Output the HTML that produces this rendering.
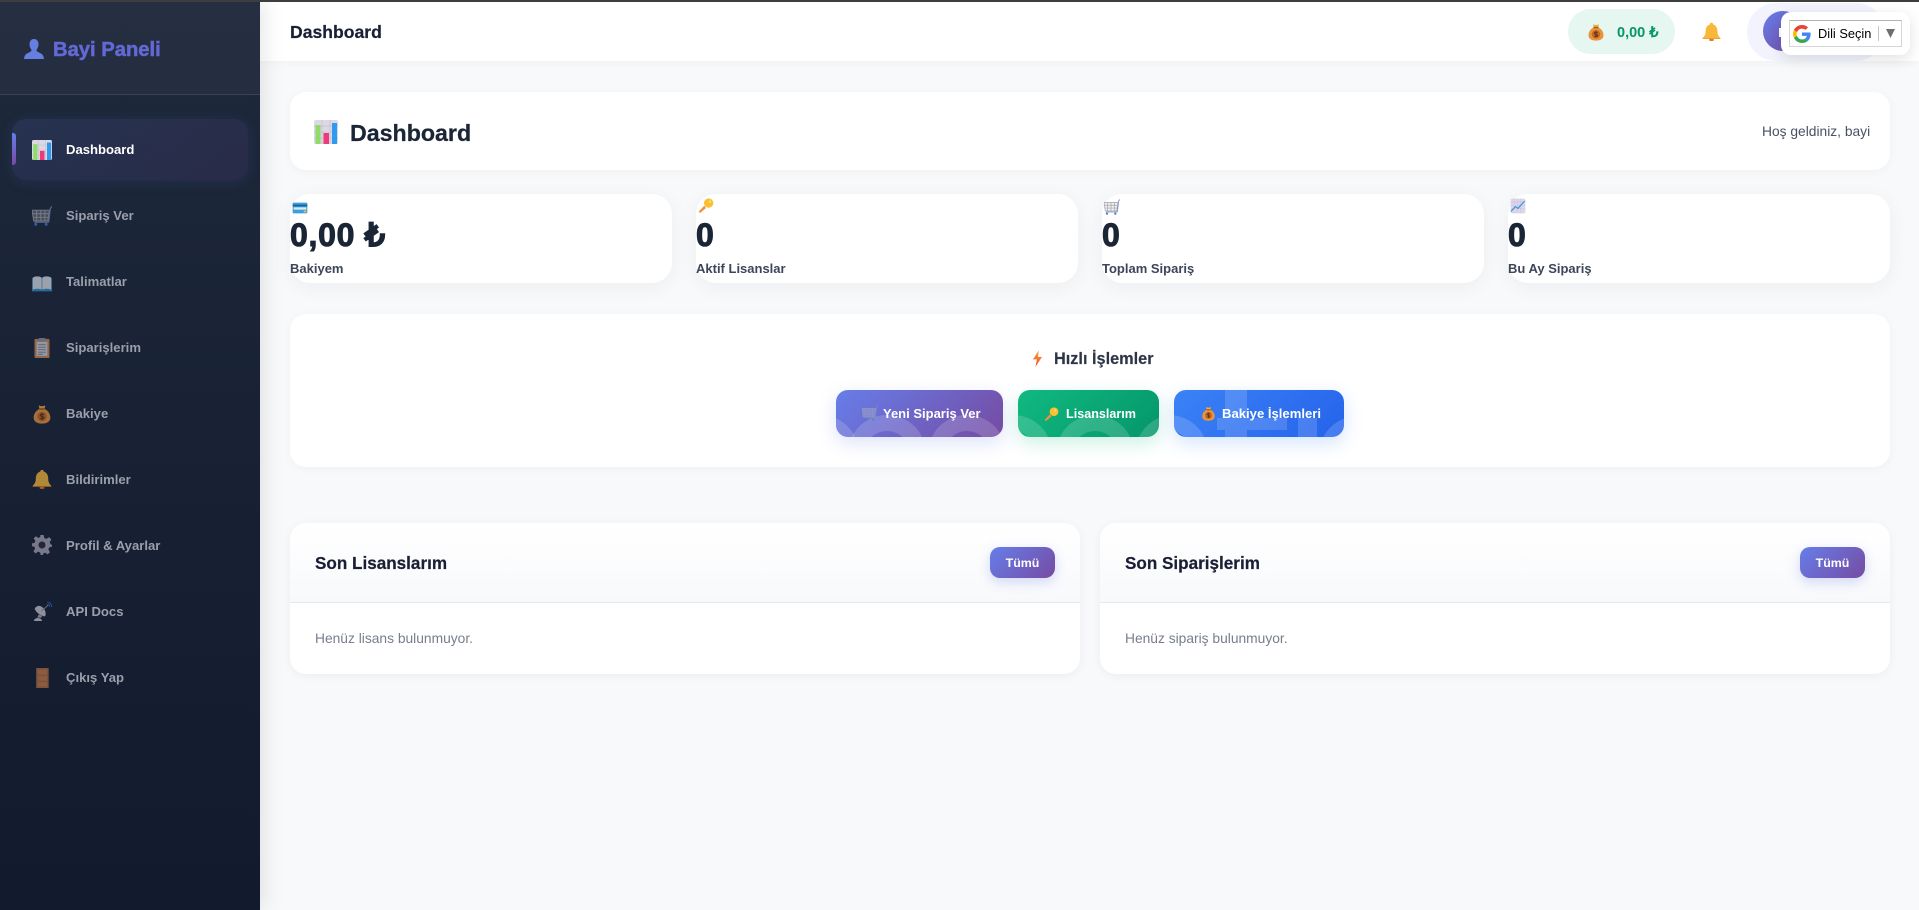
<!DOCTYPE html>
<html lang="tr">
<head>
<meta charset="utf-8">
<title>Bayi Paneli - Dashboard</title>
<style>
*{box-sizing:border-box;margin:0;padding:0}
html,body{width:1919px;height:910px;overflow:hidden;background:#f8f9fb;font-family:"Liberation Sans",Arial,sans-serif}
.a{position:absolute}
.t{position:absolute;white-space:nowrap;line-height:20px;height:20px}
svg.i{position:absolute;display:block}
#strip{left:0;top:0;width:1919px;height:2px;background:#3d3d3d;z-index:50}
#side{left:0;top:0;width:260px;height:910px;background:linear-gradient(180deg,#1e293b 0%,#121a2d 100%);box-shadow:4px 0 20px rgba(0,0,0,.1);z-index:20}
#shead{left:0;top:0;width:260px;height:95px;background:rgba(255,255,255,.03);border-bottom:1px solid rgba(255,255,255,.1)}
.logo{left:53px;top:40px;font-size:20.2px;font-weight:700;color:#6268d4;-webkit-text-stroke:.5px #6268d4}
#active{left:12px;top:119px;width:236px;height:61px;border-radius:14px;background:linear-gradient(135deg,rgba(102,126,234,.13),rgba(118,75,162,.14));box-shadow:0 2px 14px rgba(102,126,234,.13)}
#bar{left:12px;top:133px;width:4px;height:32px;border-radius:0 3px 3px 0;background:linear-gradient(180deg,#667eea,#764ba2)}
.nav{left:66px;font-size:13.1px;font-weight:700;color:#9a9fab;margin-top:.5px}
.dim{opacity:.68}
#top{left:260px;top:0;width:1659px;height:61px;background:#fff;box-shadow:0 2px 8px rgba(0,0,0,.03)}
.card{position:absolute;background:#fff}
.shadow{box-shadow:0 2px 10px rgba(0,0,0,.04)}
.stat{top:194px;width:382px;height:89px;border-radius:20px;box-shadow:0 4px 20px rgba(0,0,0,.05)}
.val{font-size:32px;font-weight:700;color:#1a2536;-webkit-text-stroke:1px #1a2536;line-height:36px;height:36px;top:217px;letter-spacing:.7px}
.lab{font-size:13px;font-weight:700;color:#3d4659;top:259px}
.btn{position:absolute;top:390px;height:47px;border-radius:12px;overflow:hidden}
.btnt{font-size:13px;font-weight:700;color:#fff;top:404px;z-index:3}
.sect{top:523px;width:790px;height:151px;border-radius:16px;overflow:hidden;box-shadow:0 2px 10px rgba(0,0,0,.05)}
.sh{position:absolute;left:0;top:0;width:100%;height:80px;background:linear-gradient(180deg,#fff,#f8f9fb);border-bottom:1px solid #e5e7ef}
.st{font-size:17.1px;font-weight:700;color:#1a1f36;top:554px;-webkit-text-stroke:.2px #1a1f36}
.se{font-size:13.8px;color:#777e8c;top:629px}
.all{position:absolute;top:547px;width:65px;height:31px;border-radius:10px;background:linear-gradient(135deg,#667eea,#764ba2);box-shadow:0 4px 12px rgba(102,126,234,.28);color:#fff;font-size:12.4px;font-weight:700;text-align:center;line-height:32px}
</style>
</head>
<body>
<svg width="0" height="0" style="position:absolute">
<defs>
<symbol id="chart" viewBox="0 0 24 24">
<rect x="0" y="0" width="24" height="24" rx="2" fill="#dcd9e4"/>
<path d="M0 6H24M0 12H24M0 18H24M8 0V24M16 0V24" stroke="#c3bfcf" stroke-width=".7"/>
<rect x="1.500" y="5" width="5" height="19" fill="#8fdc6a"/>
<rect x="9.500" y="13" width="5.500" height="11" fill="#ec3b78"/>
<rect x="18" y="3" width="5" height="21" fill="#2f9bf0"/>
</symbol>
<symbol id="cart" viewBox="0 0 24 24">
<path d="M0 5H21L19 18H2Z" fill="#d6d6de" fill-opacity=".35"/>
<path d="M0 5H21L19 18H2ZM.7 9.300H20.300M1.300 13.600H19.700M5.500 5V18M10.500 5V18M15.500 5V18" fill="none" stroke="#a4a4ac" stroke-width="1.100"/>
<path d="M20 19.500H3M20 19.500L22 3 24 .5" fill="none" stroke="#7a8fc4" stroke-width="1.300"/>
<circle cx="4.500" cy="22" r="1.700" fill="#3f7de0"/>
<circle cx="17" cy="22" r="1.700" fill="#3f7de0"/>
</symbol>
<symbol id="book" viewBox="0 0 24 24">
<path d="M0 6.500C3 3.500 8.500 3.500 12 6 15.500 3.500 21 3.500 24 6.500V22H0Z" fill="#2e8ccc"/>
<path d="M1 5.500C4 3.500 9 3.500 11.600 5.500V20C9 18.500 4 18.500 1 20ZM12.400 5.500C15 3.500 20 3.500 23 5.500V20C20 18.500 15 18.500 12.400 20Z" fill="#dcdce4"/>
</symbol>
<symbol id="clip" viewBox="0 0 24 24">
<rect x="3" y="1" width="18" height="23" rx="1.500" fill="#cc8652"/>
<rect x="5.500" y="4.500" width="13" height="17" fill="#cfcfd6"/>
<rect x="8" y="0" width="8" height="4.500" rx="1" fill="#8f8f9b"/>
<path d="M7.500 8H16.500M7.500 11H16.500M7.500 14H16.500M7.500 17H16.500M7.500 19.500H13" stroke="#7e7e8a" stroke-width="1.100"/>
</symbol>
<symbol id="money" viewBox="0 0 24 24">
<path d="M8.500 6C3.500 9 2 13 2 16.500 2 21 6 23.500 12 23.500S22 21 22 16.500C22 13 20.500 9 15.500 6Z" fill="#e9943a"/>
<path d="M8 1.500C10 3 14 3 16 1.500L15 6H9Z" fill="#f2ae3f"/>
<rect x="8.500" y="5" width="7" height="2" rx="1" fill="#a85f22"/>
<circle cx="12" cy="15" r="5.600" fill="#c06a26"/>
<path d="M14.200 12.800C13.300 11.800 10 11.800 10 13.600 10 15.500 14.200 14.500 14.200 16.500 14.200 18.200 10.700 18.200 9.800 17.200M12 10.800V19.200" fill="none" stroke="#5d2f11" stroke-width="1.200"/>
</symbol>
<symbol id="bell" viewBox="0 0 24 24">
<path d="M12 1C13.300 1 14 1.800 14 3 18 4.200 19.500 8 19.500 12 19.500 16 21 18 23.500 20.500H.5C3 18 4.500 16 4.500 12 4.500 8 6 4.200 10 3 10 1.800 10.700 1 12 1Z" fill="#f8b93a"/>
<path d="M.5 20.500H23.500L23 21.500H1Z" fill="#f08a24"/>
<ellipse cx="12" cy="22.500" rx="3" ry="1.500" fill="#e8791f"/>
</symbol>
<symbol id="gear" viewBox="0 0 24 24">
<path d="M10 0H14L14.700 3.600 17.300 4.700 20.500 2.600 23.300 5.400 21.200 8.600 22.300 11 24 12V14L20.700 14.800 19.600 17.400 21.600 20.500 18.800 23.300 15.700 21.200 13.800 22 13 24H10.500L9.700 21 7.200 20 4.300 22.200 1.700 19.500 3.700 16.500 2.700 14 0 13.500V10L3 9.500 4 7 2 4 4.700 1.500 7.500 3.500 9.800 2.600Z" fill="#a6a2b4"/>
<circle cx="12" cy="12" r="4.200" fill="#27293f"/>
</symbol>
<symbol id="sat" viewBox="0 0 24 24">
<path d="M2 9.500C4 14 9 18 14.500 18.500 16.500 14 14 8 8.500 6 5.500 5.500 3 7 2 9.500Z" fill="#c8c8d0"/>
<path d="M10 12L16 7M16 7L19 4" stroke="#8f8f99" stroke-width="1.200"/>
<path d="M17 1.500C20 1.500 22.500 4 22.500 7M17 4C18.800 4 20 5.200 20 7" fill="none" stroke="#3564c8" stroke-width="1.200"/>
<path d="M7 16L5 20H10L11 18Z" fill="#a9a9b3"/>
<path d="M1 24C1.500 21.500 3 20.500 6 20.500S10 21.500 11 24Z" fill="#c8c8d0"/>
</symbol>
<symbol id="door" viewBox="0 0 24 24">
<rect x="5" y="0" width="15" height="24" fill="#b06a3e"/>
<path d="M7 2H18V8H7ZM7 10H18V15H7ZM7 17H18V22H7Z" fill="#c27b4b"/>
</symbol>
<symbol id="key" viewBox="0 0 24 24">
<path d="M12 15L3 22.500 1 20.500 9.500 11.500Z" fill="#f2903f"/>
<circle cx="16" cy="7.500" r="7" fill="#fbbf2f"/>
<circle cx="18" cy="5.500" r="1.800" fill="#f5e08a"/>
</symbol>
<symbol id="card" viewBox="0 0 24 24">
<rect x="1" y="4" width="22" height="16" rx="1.500" fill="#3b9fdc"/>
<rect x="1" y="7" width="22" height="2.500" fill="#1c5f94"/>
<rect x="2.500" y="11" width="19" height="3.500" fill="#dce8f2"/>
<rect x="17.500" y="16" width="4" height="2.500" fill="#f2c33a"/>
</symbol>
<symbol id="trend" viewBox="0 0 24 24">
<rect x="1" y="1" width="22" height="22" rx="2" fill="#dcd6ea"/>
<path d="M1 6H23M1 11H23M1 16H23M6 1V23M11 1V23M16 1V23" stroke="#c3bcd8" stroke-width=".6"/>
<path d="M1.500 20L8 13 12 15.500 22 4.500" fill="none" stroke="#3d96e0" stroke-width="1.800"/>
</symbol>
<symbol id="bolt" viewBox="0 0 12 18">
<defs><linearGradient id="bg" x1="0" y1="0" x2="0" y2="1"><stop offset="0" stop-color="#f9a43c"/><stop offset="1" stop-color="#ee4e2e"/></linearGradient></defs>
<path d="M7.500 0L1 10H5.300L3.800 18 11 7.200H6.500Z" fill="url(#bg)"/>
</symbol>
<symbol id="person" viewBox="0 0 20 20">
<path d="M10 0C13 0 14.500 2.400 14.500 5.200 14.500 8 13 10 12.400 11 12.500 12 13 12.500 15 13.500 17.500 14.700 19.500 15.500 20 20H0C.5 15.500 2.500 14.700 5 13.500 7 12.500 7.500 12 7.600 11 7 10 5.500 8 5.500 5.200 5.500 2.400 7 0 10 0Z" fill="#667ee0"/>
</symbol>
</defs>
</svg>

<div class="a" id="strip"></div>

<div class="a" id="top"></div>
<div class="t" style="left:290px;top:22px;font-size:17.6px;font-weight:700;color:#1a1f36;-webkit-text-stroke:.2px #1a1f36">Dashboard</div>
<div class="a" style="left:1568px;top:9px;width:107px;height:45px;border-radius:23px;background:#e6f6f0"></div>
<svg class="i" style="left:1587px;top:23px" width="18" height="18"><use href="#money"/></svg>
<div class="t" style="left:1617px;top:23px;font-size:14.5px;font-weight:700;color:#059669">0,00 ₺</div>
<svg class="i" style="left:1702px;top:22px" width="19" height="19"><use href="#bell"/></svg>
<div class="a" style="left:1747px;top:3px;width:138px;height:58px;border-radius:29px;background:#f3f3fe"></div>
<div class="a" style="left:1763px;top:11px;width:40px;height:40px;border-radius:50%;background:linear-gradient(135deg,#667eea,#764ba2)"></div>
<div class="a" style="left:1779px;top:28px;width:6px;height:9px;background:#fff"></div>

<div class="a" style="left:1781px;top:12px;width:129px;height:43px;border-radius:10px;background:#fff;box-shadow:0 4px 15px rgba(0,0,0,.12);z-index:10"></div>
<div class="a" style="left:1789px;top:20px;width:113px;height:27px;border:1px solid #d6d6d6;border-top-color:#b4b4b4;background:#fff;z-index:11"></div>
<svg class="i" style="left:1793px;top:25px;z-index:12" width="18" height="18" viewBox="0 0 48 48">
<path fill="#EA4335" d="M24 9.500c3.500 0 6.700 1.200 9.200 3.600l6.900-6.900C35.900 2.400 30.500 0 24 0 14.600 0 6.500 5.400 2.600 13.200l8 6.200C12.500 13.700 17.800 9.500 24 9.500z"/>
<path fill="#4285F4" d="M47 24.500c0-1.600-.1-3.100-.4-4.500H24v9h12.900c-.6 3-2.200 5.500-4.700 7.200l7.700 6C44.400 37.600 47 31.600 47 24.500z"/>
<path fill="#FBBC05" d="M10.500 28.600c-.5-1.500-.8-3-.8-4.600s.3-3.200.8-4.600l-8-6.200C.9 16.500 0 20.100 0 24s.9 7.500 2.600 10.800l7.900-6.200z"/>
<path fill="#34A853" d="M24 48c6.500 0 11.900-2.100 15.900-5.800l-7.700-6c-2.200 1.500-5 2.300-8.200 2.300-6.200 0-11.500-4.200-13.400-9.900l-8 6.200C6.500 42.600 14.600 48 24 48z"/>
</svg>
<div class="t" style="left:1818px;top:24px;font-size:12.8px;color:#000;z-index:12">Dili Seçin</div>
<div class="a" style="left:1878px;top:26px;width:1px;height:15px;background:#c4c4c4;z-index:12"></div>
<svg class="i" style="left:1886px;top:29px;z-index:12" width="9" height="9"><path d="M0 0H9L4.500 9Z" fill="#6f6f6f"/></svg>

<div class="card shadow" style="left:290px;top:92px;width:1600px;height:78px;border-radius:16px"></div>
<svg class="i" style="left:314px;top:120px" width="24" height="24"><use href="#chart"/></svg>
<div class="t" style="left:350px;top:123px;font-size:23.2px;font-weight:700;color:#1a2536;-webkit-text-stroke:.25px #1a2536">Dashboard</div>
<div class="t" style="left:1762px;top:122px;font-size:13.8px;color:#4a5164">Hoş geldiniz, bayi</div>

<div class="card stat" style="left:290px"></div>
<div class="card stat" style="left:696px"></div>
<div class="card stat" style="left:1102px"></div>
<div class="card stat" style="left:1508px"></div>
<svg class="i" style="left:292px;top:200px" width="16" height="16"><use href="#card"/></svg>
<svg class="i" style="left:698px;top:198px" width="16" height="16"><use href="#key"/></svg>
<svg class="i" style="left:1104px;top:199px" width="16" height="16"><use href="#cart"/></svg>
<svg class="i" style="left:1510px;top:198px" width="16" height="16"><use href="#trend"/></svg>
<div class="t val" style="left:290px">0,00 ₺</div>
<div class="t val" style="left:696px">0</div>
<div class="t val" style="left:1102px">0</div>
<div class="t val" style="left:1508px">0</div>
<div class="t lab" style="left:290px">Bakiyem</div>
<div class="t lab" style="left:696px">Aktif Lisanslar</div>
<div class="t lab" style="left:1102px">Toplam Sipariş</div>
<div class="t lab" style="left:1508px">Bu Ay Sipariş</div>

<div class="card shadow" style="left:290px;top:314px;width:1600px;height:153px;border-radius:16px"></div>
<svg class="i" style="left:1032px;top:350px" width="11" height="17"><use href="#bolt"/></svg>
<div class="t" style="left:1054px;top:349px;font-size:16.3px;font-weight:700;color:#2d3446;-webkit-text-stroke:.15px #2d3446">Hızlı İşlemler</div>

<div class="btn" style="left:836px;width:167px;background:linear-gradient(135deg,#667eea,#764ba2);box-shadow:0 6px 18px rgba(102,126,234,.22)">
<svg class="a" style="left:0;top:0" width="167" height="47" fill="none" stroke="#fff" stroke-opacity=".16" stroke-width="16">
<circle cx="51" cy="64" r="31"/><circle cx="131" cy="64" r="31"/><circle cx="-16" cy="64" r="31"/><circle cx="204" cy="64" r="31"/>
</svg>
</div>
<div class="btn" style="left:1018px;width:141px;background:linear-gradient(135deg,#10b981,#059669);box-shadow:0 6px 18px rgba(16,185,129,.22)">
<svg class="a" style="left:0;top:0" width="141" height="47" fill="none" stroke="#fff" stroke-opacity=".16" stroke-width="16">
<circle cx="-5" cy="64" r="31"/><circle cx="77" cy="64" r="31"/><circle cx="156" cy="64" r="31"/>
</svg>
</div>
<div class="btn" style="left:1174px;width:170px;background:linear-gradient(135deg,#3b82f6,#2563eb);box-shadow:0 6px 18px rgba(59,130,246,.22)">
<svg class="a" style="left:0;top:0" width="170" height="47">
<g fill="none" stroke="#fff" stroke-opacity=".16" stroke-width="16"><circle cx="-5" cy="64" r="31"/><circle cx="184" cy="65" r="31"/></g>
<path d="M51 0H73V28H113V40H73V47H51V40H43V28H51Z" fill="#fff" fill-opacity=".15"/>
<rect x="124" y="28" width="19" height="19" fill="#fff" fill-opacity=".15"/>
</svg>
</div>
<svg class="i dim" style="left:862px;top:405px;z-index:3" width="16" height="16"><use href="#cart"/></svg>
<div class="t btnt" style="left:883px">Yeni Sipariş Ver</div>
<svg class="i" style="left:1044px;top:407px;z-index:3" width="15" height="15"><use href="#key"/></svg>
<div class="t btnt" style="left:1066px;font-size:12.6px">Lisanslarım</div>
<svg class="i" style="left:1201px;top:406px;z-index:3" width="15" height="15"><use href="#money"/></svg>
<div class="t btnt" style="left:1222px;font-size:13.1px">Bakiye İşlemleri</div>

<div class="card sect" style="left:290px"><div class="sh"></div></div>
<div class="card sect" style="left:1100px"><div class="sh"></div></div>
<div class="t st" style="left:315px">Son Lisanslarım</div>
<div class="t st" style="left:1125px">Son Siparişlerim</div>
<div class="all" style="left:990px">Tümü</div>
<div class="all" style="left:1800px">Tümü</div>
<div class="t se" style="left:315px">Henüz lisans bulunmuyor.</div>
<div class="t se" style="left:1125px">Henüz sipariş bulunmuyor.</div>

<div class="a" id="side">
<div class="a" id="shead"></div>
<svg class="i" style="left:24px;top:39px" width="20" height="20"><use href="#person"/></svg>
<div class="t logo">Bayi Paneli</div>
<div class="a" id="active"></div>
<div class="a" id="bar"></div>
<svg class="i" style="left:32px;top:140px" width="20" height="20"><use href="#chart"/></svg>
<div class="t nav" style="top:139px;color:#fff">Dashboard</div>
<svg class="i dim" style="left:32px;top:206px" width="20" height="20"><use href="#cart"/></svg>
<div class="t nav" style="top:205px">Sipariş Ver</div>
<svg class="i dim" style="left:32px;top:273px" width="20" height="20"><use href="#book"/></svg>
<div class="t nav" style="top:271px">Talimatlar</div>
<svg class="i dim" style="left:32px;top:338px" width="20" height="20"><use href="#clip"/></svg>
<div class="t nav" style="top:337px">Siparişlerim</div>
<svg class="i dim" style="left:32px;top:404px" width="20" height="20"><use href="#money"/></svg>
<div class="t nav" style="top:403px">Bakiye</div>
<svg class="i dim" style="left:32px;top:469px" width="20" height="20"><use href="#bell"/></svg>
<div class="t nav" style="top:469px">Bildirimler</div>
<svg class="i dim" style="left:32px;top:535px" width="20" height="20"><use href="#gear"/></svg>
<div class="t nav" style="top:535px">Profil &amp; Ayarlar</div>
<svg class="i dim" style="left:33px;top:601px" width="20" height="20"><use href="#sat"/></svg>
<div class="t nav" style="top:601px">API Docs</div>
<svg class="i dim" style="left:32px;top:668px" width="20" height="20"><use href="#door"/></svg>
<div class="t nav" style="top:667px">Çıkış Yap</div>
</div>
</body>
</html>
